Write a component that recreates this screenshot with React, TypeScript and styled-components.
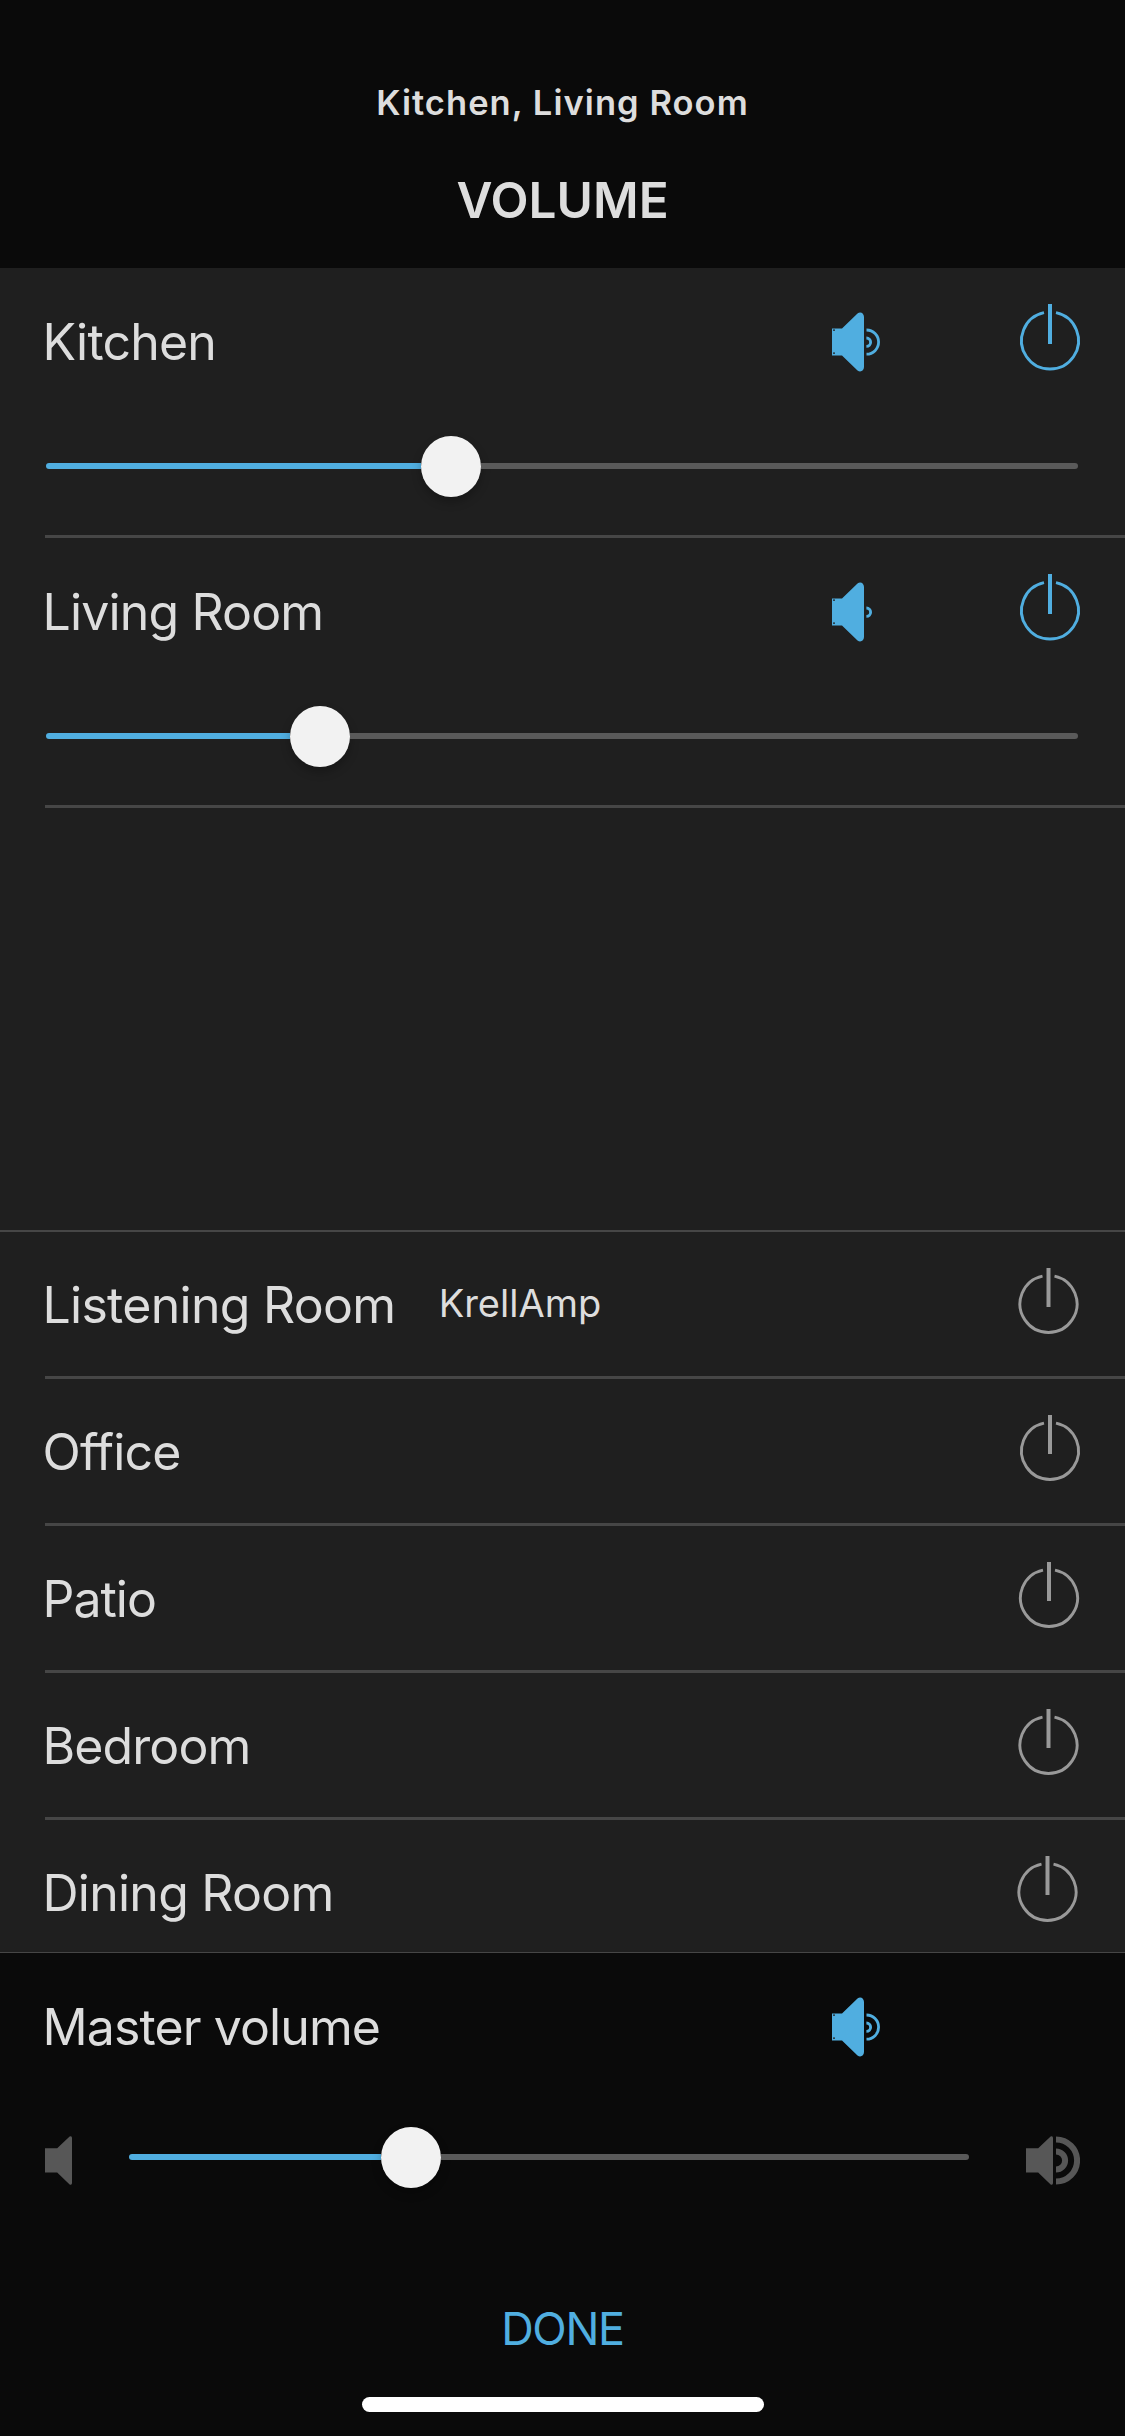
import React from "react";
import styled, { createGlobalStyle } from "styled-components";

const BLUE = "#50aee0";
const GREY = "#999999";
const MUTED = "#575757";
const PANEL = "#1f1f1f";

const GlobalStyle = createGlobalStyle`
  * { box-sizing: border-box; }
  body {
    margin: 0;
    background: #0a0a0a;
    color: #dddddd;
    font-family: Inter, "Liberation Sans", sans-serif;
    font-feature-settings: "calt" 0;
  }
`;

const Screen = styled.main`
  width: 1125px;
  height: 2436px;
  display: flex;
  flex-direction: column;
  background: #0a0a0a;
  overflow: hidden;
`;

const Header = styled.header`
  height: 268px;
  padding-top: 73px;
  display: flex;
  flex-direction: column;
  align-items: center;
`;

const Subtitle = styled.div`
  height: 60px;
  line-height: 60px;
  font-size: 34.5px;
  font-weight: 600;
  letter-spacing: 1.05px;
  white-space: nowrap;
`;

const Title = styled.h1`
  margin: 37px 0 0;
  height: 60px;
  line-height: 60px;
  font-size: 49.5px;
  font-weight: 600;
  letter-spacing: 0;
`;

const ActiveZones = styled.section`
  height: 962px;
  background: ${PANEL};
`;

const IdleZones = styled.section`
  height: 723px;
  background: ${PANEL};
  border-top: 2px solid #464646;
  border-bottom: 1px solid #464646;
  overflow: hidden;
`;

const Divider = styled.div`
  height: 3px;
  margin-left: 45px;
  background: #464646;
`;

const ZoneLine = styled.div<{ $h: number; $end?: number; $drop?: number }>`
  height: ${(p) => p.$h}px;
  padding: ${(p) => p.$drop ?? 0}px ${(p) => p.$end ?? 45}px 0 42.5px;
  display: flex;
  align-items: center;
`;

const Name = styled.div<{ $spacing: number }>`
  line-height: 60px;
  font-size: 50px;
  letter-spacing: ${(p) => p.$spacing}px;
  white-space: nowrap;
`;

const Device = styled.div`
  margin: 0 0 5px 43.3px;
  line-height: 50px;
  font-size: 38px;
  white-space: nowrap;
`;

const Push = styled.div`
  flex: 1;
`;

const SpeakerSlot = styled.div<{ $last?: boolean }>`
  width: 50px;
  height: 60px;
  margin-right: ${(p) => (p.$last ? 198 : 138)}px;
`;

const PowerSlot = styled.div<{ $lift: number }>`
  width: 60px;
  height: 68px;
  margin-bottom: ${(p) => p.$lift}px;

  svg {
    overflow: visible;
  }
`;

const SliderRow = styled.div`
  height: 100px;
  margin-bottom: 19px;
  padding: 0 47px 0 46px;
  display: flex;
  align-items: center;
`;

const Filled = styled.div`
  flex: none;
  height: 6px;
  border-radius: 3px 0 0 3px;
  background: ${BLUE};
`;

const Rest = styled.div`
  flex: 1;
  height: 6px;
  border-radius: 0 3px 3px 0;
  background: #5a5a5a;
`;

const Thumb = styled.div`
  flex: none;
  width: 60px;
  height: 61px;
  margin-top: 1px;
  border-radius: 50%;
  background: #f2f2f2;
  box-shadow: 0 5px 10px rgba(0, 0, 0, 0.25);
`;

const Footer = styled.footer`
  flex: 1;
  display: flex;
  flex-direction: column;
`;

const MasterLevel = styled.div`
  height: 119px;
  padding: 0 45px;
  display: flex;
  align-items: center;
`;

const MasterTrack = styled.div`
  flex: 1;
  display: flex;
  align-items: center;
  padding: 0 57px 7px;
`;

const Done = styled.button`
  align-self: center;
  margin: 79px 0 0;
  padding: 0;
  height: 60px;
  border: 0;
  background: none;
  color: ${BLUE};
  font: 400 45px/60px Inter, "Liberation Sans", sans-serif;
  letter-spacing: -1.3px;
`;

const HomeIndicator = styled.div`
  align-self: center;
  width: 402px;
  height: 15px;
  margin: auto 0 24px;
  border-radius: 8px;
  background: #ffffff;
`;

function PowerIcon({ on, nudge = 0 }: { on?: boolean; nudge?: number }) {
  return (
    <svg
      width="60"
      height="68"
      viewBox={`${-nudge} 0 60 68`}
      fill="none"
      stroke={on ? BLUE : GREY}
    >
      <path
        d={on ? "M24 8.7A28.5 28.5 0 1 0 36 8.7" : "M24 8.1A28.5 28.5 0 1 0 36 8.1"}
        strokeWidth="2.9"
      />
      <path d={on ? "M30 0V40" : "M30 0V39"} strokeWidth="4" />
    </svg>
  );
}

function SpeakerIcon({ waves }: { waves: 1 | 2 }) {
  return (
    <svg width="50" height="60" viewBox="0 0 50 60" fill="none">
      <path
        d="M0 16.5H10L25.5 1.6C28.5 -.8 32 1.4 32 5V55C32 58.6 28.5 60.8 25.5 58.4L10 43.5H0Z"
        fill={BLUE}
      />
      <path d="M1 18.2H3M1 41.2H3" stroke={PANEL} strokeWidth="1.3" />
      <path d="M34.4 26A4.2 4.2 0 0 1 34.4 34.4" stroke={BLUE} strokeWidth="2.9" />
      {waves === 2 && (
        <path d="M34.5 18A12.1 12.1 0 0 1 34.5 42.2" stroke={BLUE} strokeWidth="2.8" />
      )}
    </svg>
  );
}

function LevelIcon({ loud }: { loud?: boolean }) {
  return (
    <svg width={loud ? 54 : 27} height="49" viewBox={`0 0 ${loud ? 54 : 27} 49`} fill="none">
      <path d="M0 12.3H12.2L24.6 .6Q27 -.4 27 2V47Q27 49.4 24.6 48.4L12.2 36.6H0Z" fill={MUTED} />
      {loud && (
        <g stroke={MUTED} strokeWidth="6">
          <path d="M30 3.4A21.1 21.1 0 0 1 30 45.6" />
          <path d="M30 15.4A9.1 9.1 0 0 1 30 33.6" />
        </g>
      )}
    </svg>
  );
}

function Slider({ travel }: { travel: number }) {
  return (
    <>
      <Filled style={{ width: travel }} />
      <Thumb />
      <Rest />
    </>
  );
}

const active: { name: string; spacing: number; waves: 1 | 2; travel: number }[] = [
  { name: "Kitchen", spacing: -0.8, waves: 2, travel: 375 },
  { name: "Living Room", spacing: -0.85, waves: 1, travel: 243.5 },
];

const idle = [
  { name: "Listening Room", spacing: -0.72, device: "KrellAmp", end: 47, nudge: 0.5 },
  { name: "Office", spacing: -0.85, end: 45 },
  { name: "Patio", spacing: -1, end: 46 },
  { name: "Bedroom", spacing: -0.9, end: 47, nudge: 0.5 },
  { name: "Dining Room", spacing: -0.75, end: 48, nudge: 0.5 },
];

export default function App() {
  return (
    <>
      <GlobalStyle />
      <Screen>
        <Header>
          <Subtitle>Kitchen, Living Room</Subtitle>
          <Title>VOLUME</Title>
        </Header>
        <ActiveZones>
          {active.map((z) => (
            <React.Fragment key={z.name}>
              <ZoneLine $h={148}>
                <Name $spacing={z.spacing}>{z.name}</Name>
                <Push />
                <SpeakerSlot>
                  <SpeakerIcon waves={z.waves} />
                </SpeakerSlot>
                <PowerSlot $lift={8}>
                  <PowerIcon on />
                </PowerSlot>
              </ZoneLine>
              <SliderRow>
                <Slider travel={z.travel} />
              </SliderRow>
              <Divider />
            </React.Fragment>
          ))}
        </ActiveZones>
        <IdleZones>
          {idle.map((z) => (
            <React.Fragment key={z.name}>
              <ZoneLine $h={144} $end={z.end} $drop={2}>
                <Name $spacing={z.spacing}>{z.name}</Name>
                {z.device && <Device>{z.device}</Device>}
                <Push />
                <PowerSlot $lift={6}>
                  <PowerIcon nudge={z.nudge} />
                </PowerSlot>
              </ZoneLine>
              <Divider />
            </React.Fragment>
          ))}
        </IdleZones>
        <Footer>
          <ZoneLine $h={148}>
            <Name $spacing={-0.9}>Master volume</Name>
            <Push />
            <SpeakerSlot $last>
              <SpeakerIcon waves={2} />
            </SpeakerSlot>
          </ZoneLine>
          <MasterLevel>
            <LevelIcon />
            <MasterTrack>
              <Slider travel={252} />
            </MasterTrack>
            <LevelIcon loud />
          </MasterLevel>
          <Done>DONE</Done>
          <HomeIndicator />
        </Footer>
      </Screen>
    </>
  );
}
